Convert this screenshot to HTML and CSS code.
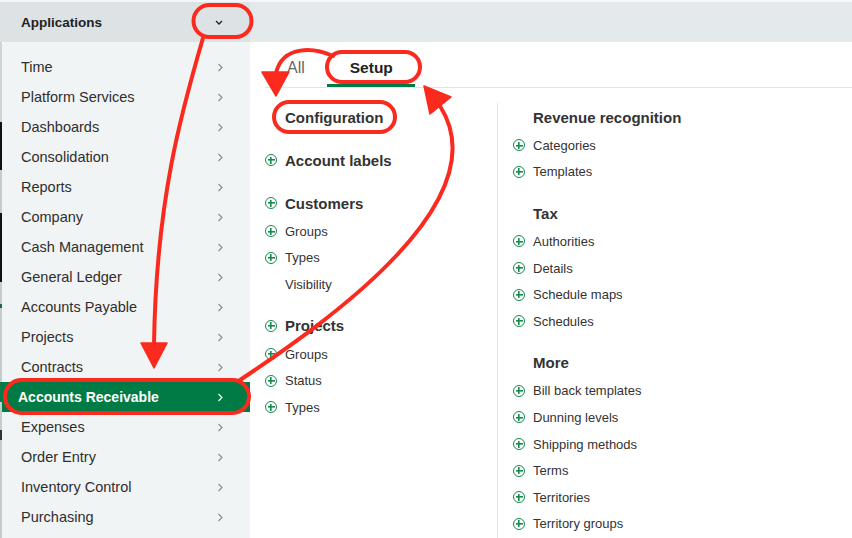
FILE: index.html
```html
<!DOCTYPE html>
<html lang="en">
<head>
<meta charset="utf-8">
<title>Applications menu</title>
<link rel="stylesheet" href="styles.css">
</head>
<body>
<div class="page">
  <div class="topline"></div>
  <header class="header">
    <div class="header-left">
      <span class="app-title">Applications</span>
      <svg class="caret-down" width="8" height="5" viewBox="0 0 8 5"><polyline points="1,1 4,4 7,1" fill="none" stroke="#222" stroke-width="1.3"/></svg>
    </div>
    <div class="header-right"></div>
  </header>
  <div class="body-row">
    <div class="strip"></div>
    <nav class="sidebar">
      <div class="nav-item"><span>Time</span><svg class="chev" width="6" height="9" viewBox="0 0 6 9"><polyline points="1.5,1 5,4.5 1.5,8" fill="none" stroke="#8a8a8a" stroke-width="1.1"/></svg></div>
      <div class="nav-item"><span>Platform Services</span><svg class="chev" width="6" height="9" viewBox="0 0 6 9"><polyline points="1.5,1 5,4.5 1.5,8" fill="none" stroke="#8a8a8a" stroke-width="1.1"/></svg></div>
      <div class="nav-item"><span>Dashboards</span><svg class="chev" width="6" height="9" viewBox="0 0 6 9"><polyline points="1.5,1 5,4.5 1.5,8" fill="none" stroke="#8a8a8a" stroke-width="1.1"/></svg></div>
      <div class="nav-item"><span>Consolidation</span><svg class="chev" width="6" height="9" viewBox="0 0 6 9"><polyline points="1.5,1 5,4.5 1.5,8" fill="none" stroke="#8a8a8a" stroke-width="1.1"/></svg></div>
      <div class="nav-item"><span>Reports</span><svg class="chev" width="6" height="9" viewBox="0 0 6 9"><polyline points="1.5,1 5,4.5 1.5,8" fill="none" stroke="#8a8a8a" stroke-width="1.1"/></svg></div>
      <div class="nav-item"><span>Company</span><svg class="chev" width="6" height="9" viewBox="0 0 6 9"><polyline points="1.5,1 5,4.5 1.5,8" fill="none" stroke="#8a8a8a" stroke-width="1.1"/></svg></div>
      <div class="nav-item"><span>Cash Management</span><svg class="chev" width="6" height="9" viewBox="0 0 6 9"><polyline points="1.5,1 5,4.5 1.5,8" fill="none" stroke="#8a8a8a" stroke-width="1.1"/></svg></div>
      <div class="nav-item"><span>General Ledger</span><svg class="chev" width="6" height="9" viewBox="0 0 6 9"><polyline points="1.5,1 5,4.5 1.5,8" fill="none" stroke="#8a8a8a" stroke-width="1.1"/></svg></div>
      <div class="nav-item"><span>Accounts Payable</span><svg class="chev" width="6" height="9" viewBox="0 0 6 9"><polyline points="1.5,1 5,4.5 1.5,8" fill="none" stroke="#8a8a8a" stroke-width="1.1"/></svg></div>
      <div class="nav-item"><span>Projects</span><svg class="chev" width="6" height="9" viewBox="0 0 6 9"><polyline points="1.5,1 5,4.5 1.5,8" fill="none" stroke="#8a8a8a" stroke-width="1.1"/></svg></div>
      <div class="nav-item"><span>Contracts</span><svg class="chev" width="6" height="9" viewBox="0 0 6 9"><polyline points="1.5,1 5,4.5 1.5,8" fill="none" stroke="#8a8a8a" stroke-width="1.1"/></svg></div>
      <div class="nav-item active"><span>Accounts Receivable</span><svg class="chev" width="6" height="9" viewBox="0 0 6 9"><polyline points="1.5,1 5,4.5 1.5,8" fill="none" stroke="#fff" stroke-width="1.1"/></svg></div>
      <div class="nav-item"><span>Expenses</span><svg class="chev" width="6" height="9" viewBox="0 0 6 9"><polyline points="1.5,1 5,4.5 1.5,8" fill="none" stroke="#8a8a8a" stroke-width="1.1"/></svg></div>
      <div class="nav-item"><span>Order Entry</span><svg class="chev" width="6" height="9" viewBox="0 0 6 9"><polyline points="1.5,1 5,4.5 1.5,8" fill="none" stroke="#8a8a8a" stroke-width="1.1"/></svg></div>
      <div class="nav-item"><span>Inventory Control</span><svg class="chev" width="6" height="9" viewBox="0 0 6 9"><polyline points="1.5,1 5,4.5 1.5,8" fill="none" stroke="#8a8a8a" stroke-width="1.1"/></svg></div>
      <div class="nav-item"><span>Purchasing</span><svg class="chev" width="6" height="9" viewBox="0 0 6 9"><polyline points="1.5,1 5,4.5 1.5,8" fill="none" stroke="#8a8a8a" stroke-width="1.1"/></svg></div>
    </nav>
    <main class="main">
      <div class="tabs">
        <div class="tab">All</div>
        <div class="tab selected">Setup</div>
      </div>
      <div class="content">
        <div class="col col-left">
          <section class="group">
            <div class="heading no-icon">Configuration</div>
          </section>
          <section class="group">
            <div class="heading"><span class="plus"></span>Account labels</div>
          </section>
          <section class="group">
            <div class="heading"><span class="plus"></span>Customers</div>
            <div class="item"><span class="plus"></span>Groups</div>
            <div class="item"><span class="plus"></span>Types</div>
            <div class="item"><span class="plus blank"></span>Visibility</div>
          </section>
          <section class="group">
            <div class="heading"><span class="plus"></span>Projects</div>
            <div class="item"><span class="plus"></span>Groups</div>
            <div class="item"><span class="plus"></span>Status</div>
            <div class="item"><span class="plus"></span>Types</div>
          </section>
        </div>
        <div class="col col-right">
          <section class="group">
            <div class="heading no-icon">Revenue recognition</div>
            <div class="item"><span class="plus"></span>Categories</div>
            <div class="item"><span class="plus"></span>Templates</div>
          </section>
          <section class="group">
            <div class="heading no-icon">Tax</div>
            <div class="item"><span class="plus"></span>Authorities</div>
            <div class="item"><span class="plus"></span>Details</div>
            <div class="item"><span class="plus"></span>Schedule maps</div>
            <div class="item"><span class="plus"></span>Schedules</div>
          </section>
          <section class="group">
            <div class="heading no-icon">More</div>
            <div class="item"><span class="plus"></span>Bill back templates</div>
            <div class="item"><span class="plus"></span>Dunning levels</div>
            <div class="item"><span class="plus"></span>Shipping methods</div>
            <div class="item"><span class="plus"></span>Terms</div>
            <div class="item"><span class="plus"></span>Territories</div>
            <div class="item"><span class="plus"></span>Territory groups</div>
          </section>
        </div>
      </div>
    </main>
  </div>

  <svg class="annotations" width="852" height="538" viewBox="0 0 852 538">
    <g fill="none" stroke="#fb2a1e" stroke-width="4" stroke-linecap="round">
      <rect x="193.5" y="5" width="58" height="32" rx="16"/>
      <rect x="327" y="52" width="93" height="30" rx="15"/>
      <rect x="274" y="102" width="121" height="30" rx="15"/>
      <rect x="5" y="380" width="244" height="33" rx="16.5"/>
      <path d="M 203 38 C 182 110, 156 200, 154 345"/>
      <path d="M 333 56 C 315 48, 283 44, 276 73"/>
      <path d="M 240 380 C 330 320, 500 200, 440 106"/>
    </g>
    <g fill="#fb2a1e" stroke="#fb2a1e" stroke-width="1.5" stroke-linejoin="round">
      <polygon points="141,343 167,343 154,368"/>
      <polygon points="262,72 289,72 276,96"/>
      <polygon points="424,86 451,97 430,114"/>
    </g>
  </svg>
</div>
</body>
</html>
```

FILE: styles.css
```css
* {
  box-sizing: border-box;
}

html, body {
  margin: 0;
  padding: 0;
  background: #ffffff;
}

body {
  font-family: "Liberation Sans", Arial, Helvetica, sans-serif;
  color: #333333;
}

.page {
  position: relative;
  width: 852px;
  height: 538px;
  overflow: hidden;
  background: #ffffff;
}

.topline {
  height: 2px;
  background: #f4f6f7;
}

.header {
  display: flex;
  height: 40px;
}

.header-left {
  width: 250px;
  background: #dde2e5;
  display: flex;
  align-items: center;
  justify-content: space-between;
  padding: 0 27px 0 21px;
}

.app-title {
  font-weight: 700;
  font-size: 13.5px;
  color: #222222;
}

.caret-down {
  display: block;
}

.header-right {
  flex: 1;
  background: #e4e9eb;
}

.body-row {
  display: flex;
  height: 496px;
}

.strip {
  width: 2px;
  background: linear-gradient(to bottom,
    #cfd3d6 0px, #cfd3d6 80px,
    #111111 80px, #111111 128px,
    #c8cbce 128px, #c8cbce 171px,
    #111111 171px, #111111 240px,
    #c8cbce 240px, #c8cbce 262px,
    #1d6b45 262px, #1d6b45 266px,
    #c8cbce 266px, #c8cbce 340px,
    #0a7a45 340px, #0a7a45 360px,
    #c8cbce 360px, #c8cbce 388px,
    #333333 388px, #333333 398px,
    #c8cbce 398px);
}

.sidebar {
  width: 248px;
  background: #f1f4f5;
  padding-top: 10px;
  border-top-left-radius: 4px;
}

.nav-item {
  height: 30px;
  display: flex;
  align-items: center;
  justify-content: space-between;
  padding: 0 27px 0 19px;
  font-size: 14.5px;
  color: #2e2e2e;
}

.nav-item.active {
  background: #007b45;
  color: #ffffff;
  font-weight: 700;
  font-size: 14px;
  padding-left: 16px;
}

.chev {
  display: block;
}

.main {
  flex: 1;
  background: #ffffff;
}

.tabs {
  display: flex;
  margin-left: 15px;
  border-bottom: 1px solid #e2e5e7;
  height: 46px;
}

.tab {
  padding: 10px 22px 0 22px;
  height: 45px;
  line-height: 32px;
  font-size: 16px;
  color: #666666;
  border-bottom: 3px solid transparent;
}

.tab.selected {
  color: #222222;
  font-weight: 700;
  font-size: 15.5px;
  padding: 10px 22px 0 23px;
  border-bottom-color: #007b45;
}

.content {
  display: flex;
  padding: 14px 0 0 15px;
}

.col-left {
  width: 232px;
}

.col-right {
  flex: 1;
  border-left: 1px solid #e6e9eb;
  border-top-left-radius: 2px;
  padding-left: 15px;
  height: 440px;
}

.group {
  margin-bottom: 13px;
}

.heading {
  height: 30px;
  display: flex;
  align-items: center;
  gap: 8px;
  font-size: 15px;
  font-weight: 700;
  color: #333333;
}

.heading.no-icon {
  padding-left: 20px;
}

.item {
  height: 26.6px;
  display: flex;
  align-items: center;
  gap: 8px;
  font-size: 13px;
  color: #333333;
}

.plus {
  flex: none;
  width: 12px;
  height: 12px;
  border: 1.6px solid #16894e;
  border-radius: 50%;
  background:
    linear-gradient(#16894e, #16894e) center / 7px 1.6px no-repeat,
    linear-gradient(#16894e, #16894e) center / 1.6px 7px no-repeat;
}

.plus.blank {
  border-color: transparent;
  background: none;
}

.annotations {
  position: absolute;
  left: 0;
  top: 0;
  pointer-events: none;
}
```
